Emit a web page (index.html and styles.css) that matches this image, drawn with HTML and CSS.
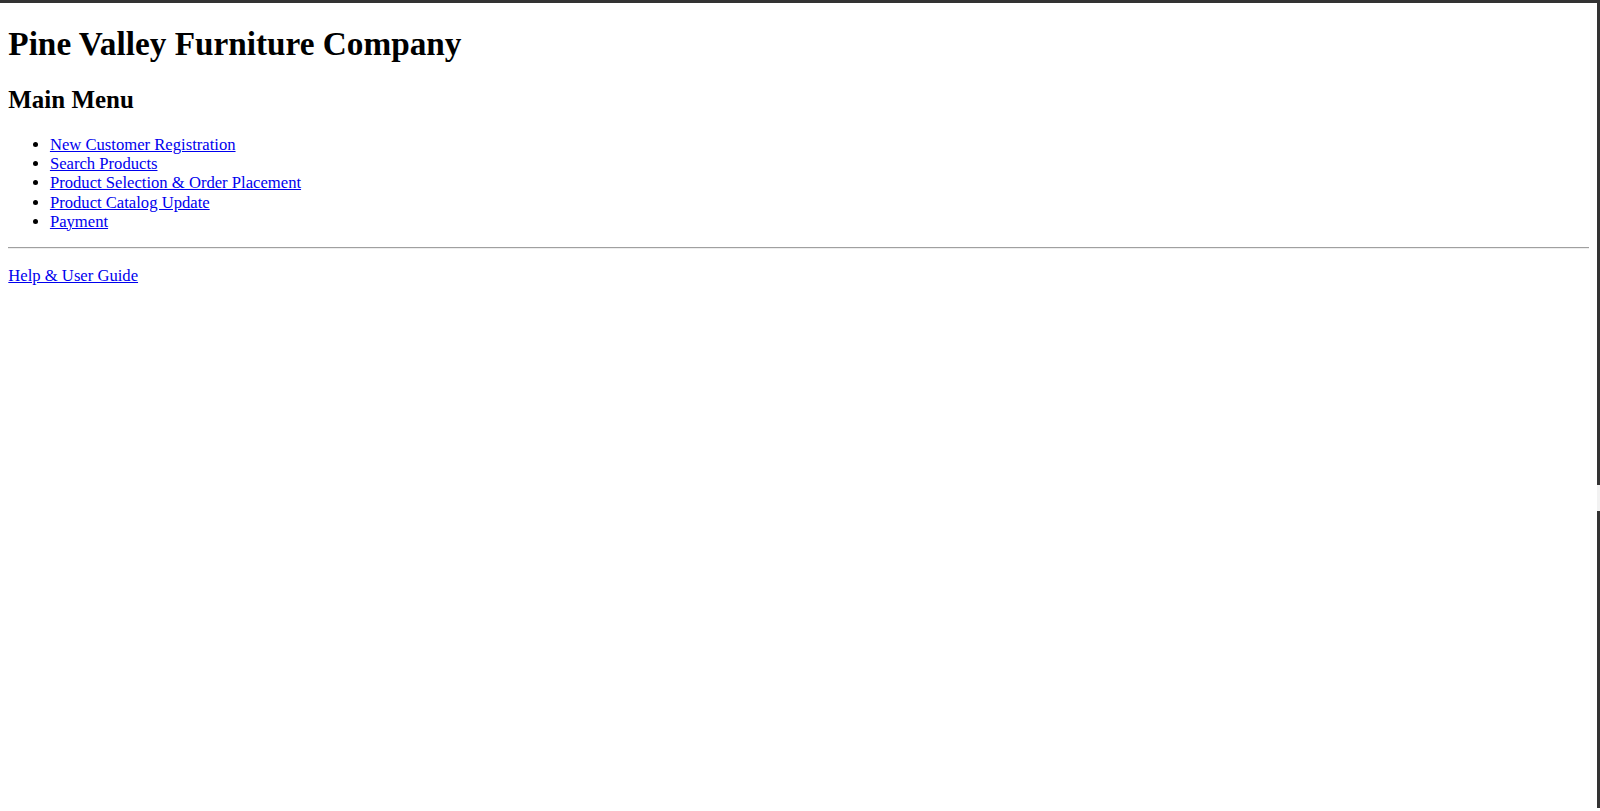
FILE: index.html
```html
<!DOCTYPE html>
<html lang="en">
<head>
<meta charset="utf-8">
<title>Pine Valley Furniture Company</title>
<link rel="stylesheet" href="styles.css">
</head>
<body>
<h1 class="title">Pine Valley Furniture Company</h1>
<h2 class="subtitle">Main Menu</h2>
<ul class="menu">
  <li><a href="#">New Customer Registration</a></li>
  <li><a href="#">Search Products</a></li>
  <li><a href="#">Product Selection &amp; Order Placement</a></li>
  <li><a href="#">Product Catalog Update</a></li>
  <li><a href="#">Payment</a></li>
</ul>
<hr class="divider">
<p class="help-line"><a class="help" href="#">Help &amp; User Guide</a></p>
</body>
</html>
```
FILE: styles.css
```css
html {
  position: relative;
  border-top: 3px solid #333;
  border-right: 3px solid #333;
  min-height: 808px;
  box-sizing: border-box;
  background: #fff;
}
html::after {
  content: "";
  position: absolute;
  right: -3px;
  top: 482px;
  width: 3px;
  height: 26px;
  background: #f2f2f2;
}
body {
  margin: 0 8.32px 8.32px;
  font-family: "Liberation Serif", "Times New Roman", serif;
  font-size: 16.64px;
  line-height: 1.149;
  color: #000;
}
.title {
  font-size: 2em;
  margin: 0.67em 0;
}
.subtitle {
  font-size: 1.5em;
  margin: 0.83em 0;
}
.menu {
  margin: 1em 0;
  padding-left: 2.5em;
}
.menu a, .help {
  color: #0000ee;
}
.divider {
  border: none;
  border-top: 1px solid #a0a0a0;
  border-bottom: 1px solid #eee;
  margin: 0.5em 0;
}
.help-line {
  margin: 1em 0;
}
```
